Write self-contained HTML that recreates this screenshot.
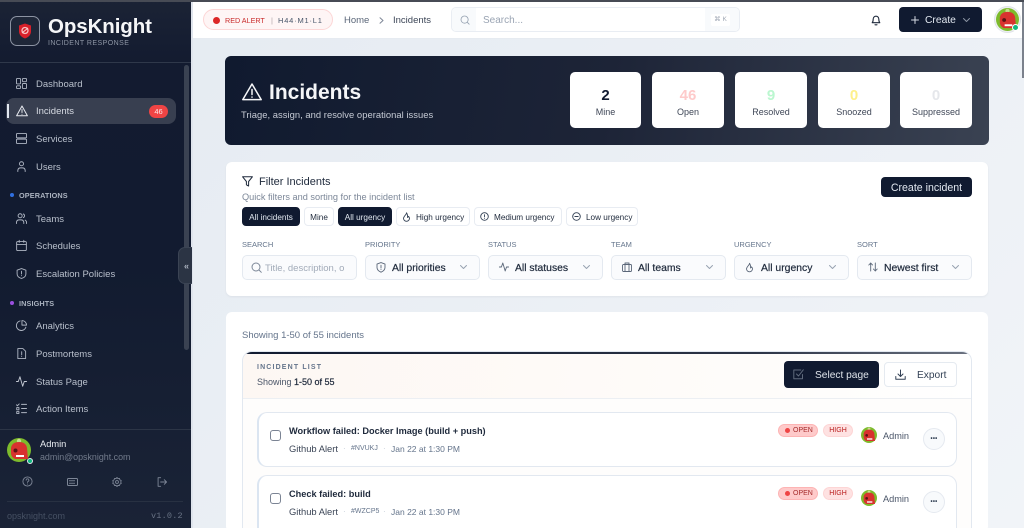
<!DOCTYPE html>
<html lang="en"><head><meta charset="utf-8"><title>Incidents</title>
<style>
*{box-sizing:border-box}
html,body{margin:0;padding:0;width:1024px;height:528px;overflow:hidden;background:#e9eef3;font-family:"Liberation Sans",sans-serif}
#r{position:absolute;left:0;top:0;width:1024px;height:528px;overflow:hidden;filter:blur(.35px);background:linear-gradient(135deg,#e4eaf1,#f1f4f8)}
.a{position:absolute}
.t{position:absolute;white-space:nowrap;line-height:0;margin-top:2px}
svg{position:absolute;overflow:visible}
.i{fill:none;stroke-width:1.5;stroke-linecap:round;stroke-linejoin:round}
.nav{font-size:9.5px;color:#b9c0cc;left:36px}
.sec{font-size:7.3px;color:#aab2bf;left:19px;font-weight:bold;letter-spacing:.1px}
.card{position:absolute;top:72px;height:56px;background:#fff;border-radius:5px}
.v{position:absolute;left:0;right:0;top:24px;line-height:0;text-align:center;font-size:15px;font-weight:bold}
.l{position:absolute;left:0;right:0;top:39.5px;line-height:0;text-align:center;font-size:9px;color:#3f4757}
.chip{position:absolute;top:207px;height:19px;border-radius:4px;border:1px solid #e8ecf2;background:#fff;font-size:8.2px;color:#1e293b;line-height:19px;white-space:nowrap}
.chip.on{background:#101a30;border-color:#101a30;color:#e2e8f0}
.lab{position:absolute;top:245px;line-height:0;font-size:7.5px;color:#64748b;white-space:nowrap}
.sel{position:absolute;top:255px;height:25px;background:#fafbfd;border:1px solid #e4e9f0;border-radius:5px}
.sel b{position:absolute;top:12.5px;line-height:0;font-size:10.4px;color:#1e293b;font-weight:normal;-webkit-text-stroke:.2px #1e293b;white-space:nowrap}
.item{position:absolute;left:257px;width:700px;height:56px;background:#fff;border:1px solid #e2e8f0;border-left:2px solid #dbe5f1;border-radius:10px}
.bo{position:absolute;left:778px;width:40px;height:13px;border-radius:7px;background:#fecaca;border:1px solid #fdb4b4}
.bh{position:absolute;left:823px;width:30px;height:13px;border-radius:7px;background:#fee2e2;border:1px solid #fdd5d5;color:#b91c1c;font-size:7px;text-align:center;line-height:12px}
.dots{position:absolute;left:923px;width:22px;height:22px;border-radius:50%;background:#f8fafc;border:1px solid #e5e9f0;color:#334155;font-size:6px;font-weight:bold;text-align:center;line-height:20px;letter-spacing:.2px}
.cb{position:absolute;left:270px;width:11px;height:11px;border:1.2px solid #7b8494;border-radius:3px;background:#fff}
</style></head><body><div id="r">
<svg width="0" height="0"><defs>
<symbol id="av" viewBox="0 0 24 24"><circle cx="12" cy="12" r="12" fill="#7dbb2c"/><circle cx="12" cy="3" r="2.2" fill="#c4de8e"/><path d="M4 10q1-6 8-6t8 6l1 11H8q-4-2-4-6z" fill="#d8322f"/><circle cx="8.5" cy="12.5" r="2" fill="#5a1414"/><rect x="9" y="17" width="8" height="2" fill="#fff"/></symbol>
</defs></svg>

<!-- sidebar -->
<div class="a" style="left:0;top:0;width:192px;height:528px;background:linear-gradient(180deg,#1b2335 0,#131b30 12%,#121b30 50%,#1a2336 100%)"></div>
<div class="a" style="left:191px;top:0;width:2px;height:528px;background:#dfe4ec"></div>
<div class="a" style="left:0;top:0;width:1024px;height:1.5px;background:#474b55"></div>
<div class="a" style="left:10px;top:16px;width:30px;height:30px;border:1px solid #8c93a2;border-radius:7px;background:#1f2738"></div>
<svg style="left:18px;top:23px" width="14" height="16" viewBox="0 0 14 16"><path d="M7 .5l6 2v6c0 3.500-3 6-6 7-3-1-6-3.500-6-7v-6z" fill="#d8202a"/><circle cx="7" cy="7.500" r="3" fill="none" stroke="#f8c0c0" stroke-width="1.300"/><path d="M4 10l6-5" stroke="#f8d0d0" stroke-width="1"/></svg>
<div class="t" style="left:48px;top:25px;font-size:20.5px;font-weight:bold;color:#f5f6f8;letter-spacing:-.1px">OpsKnight</div>
<div class="t" style="left:48px;top:42px;font-size:7px;color:#8e96a5;letter-spacing:.45px">INCIDENT RESPONSE</div>
<div class="a" style="left:0;top:62px;width:191px;height:1px;background:#2f384a"></div>
<div class="a" style="left:184px;top:65px;width:5px;height:285px;background:#3a4252;border-radius:3px"></div>

<svg class="i" style="left:16px;top:78px" width="11" height="11" viewBox="0 0 12 12" stroke="#aeb5c2" stroke-width="1"><rect x=".5" y=".5" width="4.500" height="6" rx="1" stroke-width="1"/><rect x="7" y=".5" width="4.500" height="3.500" rx="1" stroke-width="1"/><rect x="7" y="6" width="4.500" height="5.500" rx="1" stroke-width="1"/><rect x=".5" y="8.500" width="4.500" height="3" rx="1" stroke-width="1"/></svg>
<div class="t nav" style="top:83px">Dashboard</div>

<div class="a" style="left:6px;top:98px;width:170px;height:26px;background:#383f50;border-radius:8px"></div>
<div class="a" style="left:7px;top:104px;width:1.5px;height:14px;background:#e2e8f0"></div>
<svg class="i" style="left:16px;top:105px" width="12" height="12" viewBox="0 0 12 12" stroke="#e5e8ee" stroke-width="1"><path d="M6 1L.6 10.800h10.800zM6 4.500v3M6 9.200v.1" stroke-width="1"/></svg>
<div class="t nav" style="top:110px;color:#d6dae2">Incidents</div>
<div class="a" style="left:149px;top:105px;width:19px;height:13px;border-radius:7px;background:#ef4444;color:#fde8e8;font-size:7.5px;text-align:center;line-height:13px">46</div>

<svg class="i" style="left:16px;top:133px" width="11" height="11" viewBox="0 0 12 12" stroke="#aeb5c2"><rect x=".5" y=".5" width="11" height="4.800" rx="1" stroke-width="1"/><rect x=".5" y="6.700" width="11" height="4.800" rx="1" stroke-width="1"/></svg>
<div class="t nav" style="top:138px">Services</div>
<svg class="i" style="left:16px;top:161px" width="11" height="11" viewBox="0 0 12 12" stroke="#aeb5c2"><circle cx="6" cy="3" r="2.200" stroke-width="1"/><path d="M2 11.500V10a3 3 0 0 1 3-2.500h2A3 3 0 0 1 10 10v1.500" stroke-width="1"/></svg>
<div class="t nav" style="top:166px">Users</div>

<div class="a" style="left:10px;top:193px;width:4px;height:4px;border-radius:50%;background:#2f6fe0"></div>
<div class="t sec" style="top:194px">OPERATIONS</div>
<svg class="i" style="left:16px;top:213px" width="11" height="11" viewBox="0 0 12 12" stroke="#aeb5c2"><circle cx="4.500" cy="3" r="2.200" stroke-width="1"/><path d="M.5 11.500V10a3 3 0 0 1 3-2.500h2a3 3 0 0 1 3 2.500v1.500M8 1a2.200 2.200 0 0 1 0 4M10 7.800a3 3 0 0 1 1.500 2.300v1.400" stroke-width="1"/></svg>
<div class="t nav" style="top:218px">Teams</div>
<svg class="i" style="left:16px;top:240px" width="11" height="11" viewBox="0 0 12 12" stroke="#aeb5c2"><rect x=".7" y="1.700" width="10.600" height="9.800" rx="1.200" stroke-width="1"/><path d="M.7 4.800h10.600M3.500.4v2.200M8.500.4v2.200" stroke-width="1"/></svg>
<div class="t nav" style="top:245px">Schedules</div>
<svg class="i" style="left:16px;top:268px" width="11" height="11" viewBox="0 0 12 12" stroke="#aeb5c2"><path d="M6 .6l4.800 1.800v4c0 2.600-2.300 4.300-4.800 5-2.500-.7-4.800-2.400-4.800-5v-4zM6 3.500v3M6 8.300v.1" stroke-width="1"/></svg>
<div class="t nav" style="top:273px">Escalation Policies</div>

<div class="a" style="left:10px;top:301px;width:4px;height:4px;border-radius:50%;background:#9a4fe0"></div>
<div class="t sec" style="top:302px">INSIGHTS</div>
<svg class="i" style="left:16px;top:320px" width="11" height="11" viewBox="0 0 12 12" stroke="#aeb5c2"><path d="M10.800 7.800A5.300 5.300 0 1 1 4.500 1M6.500.6a5 5 0 0 1 5 5h-5z" stroke-width="1"/></svg>
<div class="t nav" style="top:325px">Analytics</div>
<svg class="i" style="left:16px;top:348px" width="11" height="11" viewBox="0 0 12 12" stroke="#aeb5c2"><path d="M2 .6h5.500L10.500 3.500v8H2zM6.200 4v3.500M6.200 9.200v.1" stroke-width="1"/></svg>
<div class="t nav" style="top:353px">Postmortems</div>
<svg class="i" style="left:16px;top:376px" width="11" height="11" viewBox="0 0 12 12" stroke="#c5cad4"><path d="M.5 6H2.500L4.300.8l3 10.400L9 6h2.500" stroke-width="1"/></svg>
<div class="t nav" style="top:381px">Status Page</div>
<svg class="i" style="left:16px;top:403px" width="11" height="11" viewBox="0 0 12 12" stroke="#aeb5c2"><path d="M.5 2l1 1 2-2M6 1.500h5.500M6 6h5.500M6 10.500h5.500M.8 5h2.400v2.400H.8zM.8 9.300h2.400v2.200H.8z" stroke-width="1"/></svg>
<div class="t nav" style="top:408px">Action Items</div>

<div class="a" style="left:178px;top:247px;width:14px;height:37px;background:#2b3444;border:1px solid #3b4454;border-right:0;border-radius:7px 0 0 7px"></div>
<div class="t" style="left:184px;top:264px;font-size:9px;color:#aab2bf;font-weight:bold">«</div>

<div class="a" style="left:0;top:429px;width:191px;height:1px;background:#2c3546"></div>
<svg style="left:7px;top:438px" width="24" height="24"><use href="#av"/></svg>
<div class="a" style="left:27px;top:458px;width:6px;height:6px;border-radius:50%;background:#10b981;border:1px solid #e5e8ee"></div>
<div class="t" style="left:40px;top:442px;font-size:9.300px;color:#e8ebf0">Admin</div>
<div class="t" style="left:40px;top:455px;font-size:8.900px;color:#727b8b">admin@opsknight.com</div>
<svg class="i" style="left:22px;top:476px" width="11" height="11" viewBox="0 0 12 12" stroke="#7d8696"><circle cx="6" cy="6" r="5" stroke-width="1"/><path d="M4.500 4.500a1.500 1.500 0 1 1 2 1.500c-.4.200-.5.500-.5 1M6 8.700v.1" stroke-width="1"/></svg>
<svg class="i" style="left:67px;top:477px" width="11" height="10" viewBox="0 0 11 10" stroke="#7d8696"><rect x=".5" y="1.500" width="10" height="7" rx="1" stroke-width="1"/><path d="M2.500 3.700h6M2.500 6.300h6" stroke-width="1" stroke-dasharray="1 1"/></svg>
<svg class="i" style="left:112px;top:477px" width="10" height="10" viewBox="0 0 11 11" stroke="#7d8696"><path d="M5.500.5l1 1.300 1.700-.2.500 1.600 1.500.8-.6 1.500.6 1.500-1.500.8-.5 1.600-1.700-.2-1 1.300-1-1.300-1.700.2-.5-1.600L.8 7l.6-1.500L.8 4l1.500-.8.5-1.600 1.700.2z" stroke-width="1"/><circle cx="5.500" cy="5.500" r="1.600" stroke-width="1"/></svg>
<svg class="i" style="left:157px;top:477px" width="10" height="10" viewBox="0 0 11 11" stroke="#7d8696"><path d="M4 .8H1.200v9.400H4M4 5.500h6.500M8 3l2.500 2.500L8 8" stroke-width="1"/></svg>
<div class="a" style="left:7px;top:501px;width:176px;height:1px;background:#283142"></div>
<div class="t" style="left:7px;top:514px;font-size:9px;color:#465063">opsknight.com</div>
<div class="t" style="left:151px;top:514px;font-size:8.500px;color:#687284;font-family:'Liberation Mono',monospace;letter-spacing:.2px">v1.0.2</div>

<!-- topbar -->
<div class="a" style="left:193px;top:1.500px;width:831px;height:37.500px;background:#fff;border-bottom:1px solid #e6ebf1"></div>
<div class="a" style="left:203px;top:9px;width:130px;height:21px;border-radius:11px;background:#fef5f5;border:1px solid #fcd6d6"></div>
<div class="a" style="left:213px;top:16.500px;width:7px;height:7px;border-radius:50%;background:#dc2626"></div>
<div class="t" style="left:225px;top:19px;font-size:7.200px;color:#c92a2a">RED ALERT</div>
<div class="t" style="left:271px;top:19px;font-size:7.500px;color:#b0a5a9">|</div>
<div class="t" style="left:278px;top:19px;font-size:7.500px;color:#475569;letter-spacing:.8px">H44·M1·L1</div>
<div class="t" style="left:344px;top:19px;font-size:9.500px;color:#5b6779">Home</div>
<svg class="i" style="left:379px;top:17px" width="5" height="7" viewBox="0 0 5 7" stroke="#7d8696"><path d="M1 .8l3 2.700-3 2.700" stroke-width="1"/></svg>
<div class="t" style="left:393px;top:19px;font-size:9.500px;color:#3c4657">Incidents</div>

<div class="a" style="left:451px;top:7px;width:289px;height:25px;border:1px solid #e9edf3;border-radius:5px;background:#fff"></div>
<div class="a" style="left:452px;top:8px;width:24px;height:23px;background:#f8fafc;border-radius:4px 0 0 4px"></div>
<div class="a" style="left:705px;top:8px;width:34px;height:23px;background:#f8fafc;border-radius:0 4px 4px 0"></div>
<svg class="i" style="left:460px;top:15px" width="10" height="10" viewBox="0 0 12 12" stroke="#94a0b0"><circle cx="5.500" cy="5.500" r="4.300" stroke-width="1"/><path d="M8.800 8.800L11 11" stroke-width="1"/></svg>
<div class="t" style="left:483px;top:19px;font-size:10px;color:#9aa4b3">Search...</div>
<div class="a" style="left:711px;top:14px;width:19px;height:12px;background:#fff;border-radius:2px;color:#a0a8b5;font-size:6.500px;text-align:center;line-height:12px">⌘ K</div>
<svg class="i" style="left:870px;top:14px" width="12" height="12" viewBox="0 0 12 12" stroke="#1e293b"><path d="M2.200 8.700c.9-1 1-2 1-3.700a2.800 2.800 0 0 1 5.600 0c0 1.700.1 2.700 1 3.700zM5 10.800h2" stroke-width="1.100"/></svg>
<div class="a" style="left:899px;top:7px;width:83px;height:25px;border-radius:4px;background:#101a30"></div>
<svg class="i" style="left:911px;top:16px" width="8" height="8" viewBox="0 0 8 8" stroke="#d6dbe3"><path d="M4 .5v7M.5 4h7" stroke-width="1"/></svg>
<div class="t" style="left:925px;top:19px;font-size:10.300px;color:#e2e8f0">Create</div>
<svg class="i" style="left:963px;top:18px" width="7" height="4" viewBox="0 0 7 4" stroke="#8b94a3"><path d="M.5.500L3.500 3.500 6.500.5" stroke-width="1"/></svg>
<div class="a" style="left:994px;top:6px;width:27px;height:27px;border-radius:50%;background:#eef0f3;border:1px solid #dfe3e8"></div>
<svg style="left:996px;top:8px" width="23" height="23"><use href="#av"/></svg>
<div class="a" style="left:1012px;top:24px;width:7px;height:7px;border-radius:50%;background:#10b981;border:1px solid #fff"></div>
<div class="a" style="left:1022px;top:2px;width:2px;height:76px;background:#7b818c"></div>

<!-- hero -->
<div class="a" style="left:225px;top:56px;width:764px;height:89px;border-radius:6px;background:linear-gradient(100deg,#101a2f 0,#1d2437 50%,#3a4252 100%)"></div>
<svg class="i" style="left:242px;top:83px" width="20" height="18" viewBox="0 0 20 18" stroke="#f6f7f9"><path d="M10 1L.8 16.600h18.400zM10 6.500v5M10 14v.1" stroke-width="1.500"/></svg>
<div class="t" style="left:269px;top:91px;font-size:21px;font-weight:bold;color:#f5f6f8">Incidents</div>
<div class="t" style="left:241px;top:113px;font-size:9.400px;color:#c6cbd5;letter-spacing:.04px">Triage, assign, and resolve operational issues</div>
<div class="card" style="left:570px;width:71px"><div class="v" style="color:#101a30">2</div><div class="l">Mine</div></div>
<div class="card" style="left:652px;width:72px"><div class="v" style="color:#fecaca">46</div><div class="l">Open</div></div>
<div class="card" style="left:735px;width:72px"><div class="v" style="color:#bbf7d0">9</div><div class="l">Resolved</div></div>
<div class="card" style="left:818px;width:72px"><div class="v" style="color:#fef08a">0</div><div class="l">Snoozed</div></div>
<div class="card" style="left:900px;width:72px"><div class="v" style="color:#e5e7eb">0</div><div class="l">Suppressed</div></div>

<!-- filter -->
<div class="a" style="left:226px;top:162px;width:762px;height:134px;background:#fff;border-radius:6px;box-shadow:0 1px 2px rgba(30,41,59,.06)"></div>
<svg class="i" style="left:242px;top:176px" width="11" height="11" viewBox="0 0 11 11" stroke="#1e293b"><path d="M.6.800h9.800L6.600 5.500V10L4.400 8.800V5.500z" stroke-width="1"/></svg>
<div class="t" style="left:259px;top:180px;font-size:11px;color:#1e293b">Filter Incidents</div>
<div class="t" style="left:242px;top:195px;font-size:9.200px;color:#7c8798">Quick filters and sorting for the incident list</div>
<div class="a" style="left:881px;top:177px;width:91px;height:20px;border-radius:4px;background:#101a30;color:#e2e8f0;font-size:10.600px;text-align:center;line-height:22px">Create incident</div>
<div class="chip on" style="left:242px;width:58px;text-align:center">All incidents</div>
<div class="chip" style="left:304px;width:30px;text-align:center">Mine</div>
<div class="chip on" style="left:338px;width:54px;text-align:center">All urgency</div>
<div class="chip" style="left:396px;width:74px;padding-left:19px">High urgency</div>
<div class="chip" style="left:474px;width:88px;padding-left:19px">Medium urgency</div>
<div class="chip" style="left:566px;width:72px;padding-left:19px">Low urgency</div>
<svg class="i" style="left:402px;top:212px" width="9" height="10" viewBox="0 0 9 10" stroke="#334155"><path d="M4.500.8c.3 1.500-2.800 3.300-3 5.500a3 3 0 0 0 6 0c0-.8-.4-1.500-1-2-.1.600-.4 1-1 1.200.3-1.700-.2-3.500-1-4.700z" stroke-width=".9"/></svg>
<svg class="i" style="left:480px;top:212px" width="9" height="9" viewBox="0 0 9 9" stroke="#334155"><circle cx="4.500" cy="4.500" r="3.800" stroke-width=".9"/><path d="M4.500 2.700v2.200M4.500 6.300v.1" stroke-width=".9"/></svg>
<svg class="i" style="left:572px;top:212px" width="9" height="9" viewBox="0 0 9 9" stroke="#334155"><circle cx="4.500" cy="4.500" r="3.800" stroke-width=".9"/><path d="M2.800 4.500h3.400" stroke-width=".9"/></svg>

<div class="lab" style="left:242px">SEARCH</div><div class="lab" style="left:365px">PRIORITY</div><div class="lab" style="left:488px">STATUS</div><div class="lab" style="left:611px">TEAM</div><div class="lab" style="left:734px">URGENCY</div><div class="lab" style="left:857px">SORT</div>

<div class="sel" style="left:242px;width:115px"><b style="left:22px;color:#a2abb9;-webkit-text-stroke:0;font-size:9.500px">Title, description, o</b></div>
<svg class="i" style="left:251px;top:262px" width="11" height="11" viewBox="0 0 11 11" stroke="#7c8798"><circle cx="5" cy="5" r="4" stroke-width="1"/><path d="M8 8l2.300 2.300" stroke-width="1"/></svg>

<div class="sel" style="left:365px;width:115px"><b style="left:26px">All priorities</b></div>
<svg class="i" style="left:376px;top:262px" width="10" height="11" viewBox="0 0 10 11" stroke="#5b6779"><path d="M5 .6l4 1.500v3.400c0 2.200-2 3.800-4 4.700-2-.9-4-2.500-4-4.700V2.100zM5 3.200v2.800M5 7.500v.1" stroke-width=".9"/></svg>
<svg class="i" style="left:460px;top:265px" width="7" height="4" viewBox="0 0 7 4" stroke="#98a2b1"><path d="M.5.500l3 3 3-3" stroke-width="1"/></svg>

<div class="sel" style="left:488px;width:115px"><b style="left:26px">All statuses</b></div>
<svg class="i" style="left:499px;top:262px" width="10" height="10" viewBox="0 0 10 10" stroke="#5b6779"><path d="M.4 5h2L3.800 1l2.400 8L7.500 5h2.100" stroke-width=".9"/></svg>
<svg class="i" style="left:583px;top:265px" width="7" height="4" viewBox="0 0 7 4" stroke="#98a2b1"><path d="M.5.500l3 3 3-3" stroke-width="1"/></svg>

<div class="sel" style="left:611px;width:115px"><b style="left:26px">All teams</b></div>
<svg class="i" style="left:622px;top:262px" width="10" height="10" viewBox="0 0 10 10" stroke="#5b6779"><rect x=".5" y="2.500" width="9" height="7" rx="1" stroke-width=".9"/><path d="M3 9.500V1h4v8.500" stroke-width=".9"/></svg>
<svg class="i" style="left:706px;top:265px" width="7" height="4" viewBox="0 0 7 4" stroke="#98a2b1"><path d="M.5.500l3 3 3-3" stroke-width="1"/></svg>

<div class="sel" style="left:734px;width:115px"><b style="left:26px">All urgency</b></div>
<svg class="i" style="left:745px;top:262px" width="9" height="11" viewBox="0 0 9 10" stroke="#5b6779"><path d="M4.500.8c.3 1.500-2.800 3.300-3 5.500a3 3 0 0 0 6 0c0-.8-.4-1.500-1-2-.1.600-.4 1-1 1.200.3-1.700-.2-3.500-1-4.700z" stroke-width=".9"/></svg>
<svg class="i" style="left:829px;top:265px" width="7" height="4" viewBox="0 0 7 4" stroke="#98a2b1"><path d="M.5.500l3 3 3-3" stroke-width="1"/></svg>

<div class="sel" style="left:857px;width:115px"><b style="left:26px">Newest first</b></div>
<svg class="i" style="left:868px;top:262px" width="10" height="10" viewBox="0 0 10 10" stroke="#5b6779"><path d="M2.700 9V1L.8 3M2.700 1l1.900 2M7.300 1v8L5.400 7M7.300 9l1.900-2" stroke-width=".9"/></svg>
<svg class="i" style="left:952px;top:265px" width="7" height="4" viewBox="0 0 7 4" stroke="#98a2b1"><path d="M.5.500l3 3 3-3" stroke-width="1"/></svg>

<!-- list -->
<div class="a" style="left:226px;top:312px;width:762px;height:220px;background:#fff;border-radius:6px"></div>
<div class="t" style="left:242px;top:334px;font-size:9.500px;color:#64748b">Showing 1-50 of 55 incidents</div>
<div class="a" style="left:242px;top:351px;width:730px;height:190px;background:#fff;border:1px solid #e2e8f0;border-radius:10px;overflow:hidden">
<div class="a" style="left:-1px;top:-1px;width:732px;height:3px;background:linear-gradient(90deg,#101a30,#2c3446 70%,#6b7280)"></div>
<div class="a" style="left:0;top:2px;width:730px;height:45px;background:linear-gradient(90deg,#fdf7f3,#fefcfa 70%,#fff);border-bottom:1px solid #eceff3"></div>
<div class="a" style="left:0;top:47px;width:730px;height:150px;background:#fefdfc"></div>
</div>
<div class="t" style="left:257px;top:366px;font-size:7px;font-weight:bold;color:#64748b;letter-spacing:1.150px">INCIDENT LIST</div>
<div class="t" style="left:257px;top:380px;font-size:9px;color:#4a5568">Showing <span style="color:#1e293b;-webkit-text-stroke:.2px #1e293b">1-50 of 55</span></div>
<div class="a" style="left:784px;top:361px;width:95px;height:27px;border-radius:4px;background:#101a30"></div>
<svg class="i" style="left:793px;top:369px" width="11" height="11" viewBox="0 0 11 11" stroke="#5f6a7c"><path d="M9.500 5.500v4.300H.8V1h7M3.500 5l2 2L10.300.8" stroke-width="1"/></svg>
<div class="t" style="left:815px;top:374px;font-size:10.200px;color:#dfe4ea">Select page</div>
<div class="a" style="left:884px;top:362px;width:73px;height:25px;border-radius:4px;background:#fff;border:1px solid #e5eaf0"></div>
<svg class="i" style="left:895px;top:369px" width="11" height="11" viewBox="0 0 11 11" stroke="#334155"><path d="M5.500 1v6M3 5l2.500 2.500L8 5M.8 7.500v2.700h9.400V7.500" stroke-width="1"/></svg>
<div class="t" style="left:917px;top:374px;font-size:10.200px;color:#334155">Export</div>

<div class="item" style="top:412px;height:55px"></div>
<div class="cb" style="top:430px"></div>
<div class="t" style="left:289px;top:429px;font-size:9.200px;font-weight:bold;color:#1e293b">Workflow failed: Docker Image (build + push)</div>
<div class="t" style="left:289px;top:447px;font-size:9.400px;color:#3c4657">Github Alert</div>
<div class="t" style="left:343px;top:447px;font-size:8px;color:#c5ccd6">·</div>
<div class="t" style="left:351px;top:447px;font-size:7px;color:#64748b">#NVUKJ</div>
<div class="t" style="left:383px;top:447px;font-size:8px;color:#c5ccd6">·</div>
<div class="t" style="left:391px;top:447px;font-size:8.500px;color:#64748b">Jan 22 at 1:30 PM</div>
<div class="bo" style="top:424px"></div><div class="a" style="left:785px;top:428px;width:5px;height:5px;border-radius:50%;background:#ef4444"></div><div class="t" style="left:793px;top:429px;font-size:7px;color:#a52a2a">OPEN</div>
<div class="bh" style="top:424px">HIGH</div>
<svg style="left:861px;top:427px" width="16" height="16"><use href="#av"/></svg>
<div class="t" style="left:883px;top:434px;font-size:9.200px;color:#4a5568">Admin</div>
<div class="dots" style="top:428px">•••</div>

<div class="item" style="top:475px;height:70px"></div>
<div class="cb" style="top:493px"></div>
<div class="t" style="left:289px;top:492px;font-size:9.200px;font-weight:bold;color:#1e293b">Check failed: build</div>
<div class="t" style="left:289px;top:510px;font-size:9.400px;color:#3c4657">Github Alert</div>
<div class="t" style="left:343px;top:510px;font-size:8px;color:#c5ccd6">·</div>
<div class="t" style="left:351px;top:510px;font-size:7px;color:#64748b">#WZCP5</div>
<div class="t" style="left:383px;top:510px;font-size:8px;color:#c5ccd6">·</div>
<div class="t" style="left:391px;top:510px;font-size:8.500px;color:#64748b">Jan 22 at 1:30 PM</div>
<div class="bo" style="top:487px"></div><div class="a" style="left:785px;top:491px;width:5px;height:5px;border-radius:50%;background:#ef4444"></div><div class="t" style="left:793px;top:492px;font-size:7px;color:#a52a2a">OPEN</div>
<div class="bh" style="top:487px">HIGH</div>
<svg style="left:861px;top:490px" width="16" height="16"><use href="#av"/></svg>
<div class="t" style="left:883px;top:497px;font-size:9.200px;color:#4a5568">Admin</div>
<div class="dots" style="top:491px">•••</div>
</div></body></html>
